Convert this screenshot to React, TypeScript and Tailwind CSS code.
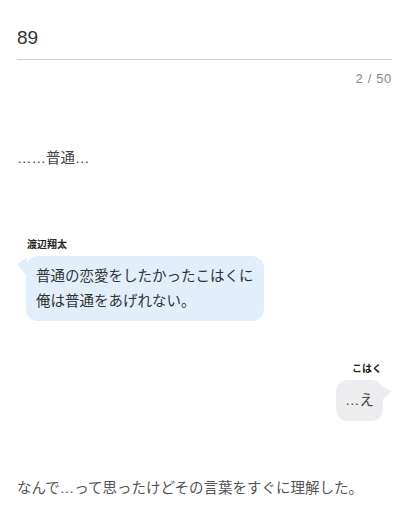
import React from 'react';

const jp = "font-['Liberation_Sans','Noto_Sans_CJK_JP',sans-serif]";

const LeftBubble: React.FC<{ name: string; lines: string[] }> = ({ name, lines }) => (
  <div className="flex flex-col items-start pl-[9px]">
    <span className="text-[10px] font-bold leading-[14px] text-[#222] pl-[1px]">{name}</span>
    <div className="relative mt-[4px] rounded-[12px] bg-[#e2eefa] px-[10px] pt-[8px] pb-[7px]">
      {/* tail */}
      <svg className="absolute left-[-9px] top-[2px]" width="10" height="18" viewBox="0 0 10 18">
        <path d="M10 0 L0 6 L10 18 Z" fill="#e2eefa" />
      </svg>
      {lines.map((l) => (
        <p key={l} className="text-[14.5px] leading-[25px] text-[#333]">{l}</p>
      ))}
    </div>
  </div>
);

const RightBubble: React.FC<{ name: string; text: string }> = ({ name, text }) => (
  <div className="flex flex-col items-end pr-[9px]">
    <span className="text-[10px] font-bold leading-[14px] text-[#222] pr-[1px]">{name}</span>
    <div className="relative mt-[4px] rounded-[12px] bg-[#ededef] px-[9px] py-[8px]">
      <svg className="absolute right-[-9px] top-[6px]" width="10" height="14" viewBox="0 0 10 14">
        <path d="M0 0 L10 5 L0 14 Z" fill="#ededef" />
      </svg>
      <p className="text-[14.5px] leading-[25px] text-[#444]">{text}</p>
    </div>
  </div>
);

export default function App() {
  return (
    <div className={`${jp} h-[520px] w-[409px] overflow-hidden bg-white px-[17px]`}>
      {/* title input */}
      <div className="border-b border-[#cfcfcf] pt-[26px] pb-[9px]">
        <p className="text-[19px] leading-[24px] text-[#333]">89</p>
      </div>
      <p className="mt-[10px] text-right text-[13px] leading-[18px] tracking-[0.05em] text-[#888]">2 / 50</p>

      <p className="mt-[59px] text-[14.5px] leading-[22px] text-[#444]">……普通…</p>

      <div className="mt-[69px]">
        <LeftBubble name="渡辺翔太" lines={['普通の恋愛をしたかったこはくに', '俺は普通をあげれない。']} />
      </div>

      <div className="mt-[41px]">
        <RightBubble name="こはく" text="…え" />
      </div>

      <p className="mt-[56px] text-[14.5px] leading-[22px] text-[#555]">
        なんで…って思ったけどその言葉をすぐに理解した。
      </p>
    </div>
  );
}
